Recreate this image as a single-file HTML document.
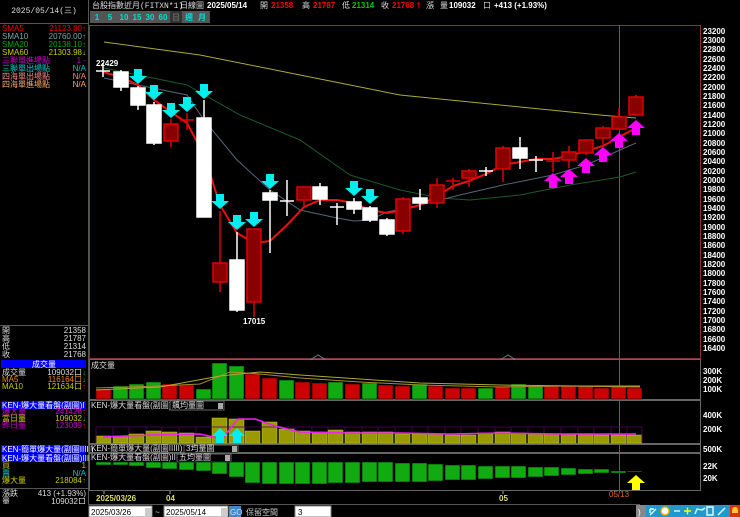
<!DOCTYPE html>
<html><head><meta charset="utf-8"><style>
body{margin:0;background:#000;width:740px;height:517px;overflow:hidden}
svg{display:block}
text{font-family:"Liberation Sans","Noto Sans CJK TC",sans-serif;font-size:8px}
.m{font-family:"Liberation Mono","Noto Sans CJK TC",monospace}
.ax{font-size:8px;fill:#fff;font-weight:bold}
</style></head><body>
<svg width="740" height="517" viewBox="0 0 740 517" xmlns="http://www.w3.org/2000/svg">
<rect width="740" height="517" fill="#000"/>
<!-- left panel border -->
<line x1="88.5" y1="0" x2="88.5" y2="505" stroke="#555"/>
<line x1="0" y1="23.5" x2="88" y2="23.5" stroke="#555"/>
<text x="44" y="13" fill="#ddd" text-anchor="middle" class="m">2025/05/14(三)</text>
<g class="m" font-size="7">
<text x="2" y="31" fill="#e00">SMA5</text><text x="86" y="31" fill="#e00" text-anchor="end">21123.80↑</text>
<text x="2" y="39" fill="#7aa">SMA10</text><text x="86" y="39" fill="#7aa" text-anchor="end">20760.00↑</text>
<text x="2" y="47" fill="#0a0">SMA20</text><text x="86" y="47" fill="#0a0" text-anchor="end">20138.10↑</text>
<text x="2" y="55" fill="#cc0">SMA60</text><text x="86" y="55" fill="#cc0" text-anchor="end">21303.98↓</text>
<text x="2" y="63" fill="#c0c">三聯單進場點</text><text x="86" y="63" fill="#c0c" text-anchor="end">1 -</text>
<text x="2" y="71" fill="#0cc">三聯單出場點</text><text x="86" y="71" fill="#0cc" text-anchor="end">N/A</text>
<text x="2" y="79" fill="#f88">四海單出場點</text><text x="86" y="79" fill="#f88" text-anchor="end">N/A</text>
<text x="2" y="87" fill="#fa6">四海單進場點</text><text x="86" y="87" fill="#fa6" text-anchor="end">N/A</text>
<line x1="0" y1="325.5" x2="88" y2="325.5" stroke="#555"/>
<text x="2" y="333" fill="#ddd">開</text><text x="86" y="333" fill="#ddd" text-anchor="end">21358</text>
<text x="2" y="341" fill="#ddd">高</text><text x="86" y="341" fill="#ddd" text-anchor="end">21787</text>
<text x="2" y="349" fill="#ddd">低</text><text x="86" y="349" fill="#ddd" text-anchor="end">21314</text>
<text x="2" y="357" fill="#ddd">收</text><text x="86" y="357" fill="#ddd" text-anchor="end">21768</text>
<rect x="1" y="360" width="85" height="8" fill="#00f"/><text x="44" y="367" fill="#fff" text-anchor="middle">成交量</text>
<text x="2" y="375" fill="#ddd">成交量</text><text x="86" y="375" fill="#ddd" text-anchor="end">109032口<tspan fill="#0c0">↓</tspan></text>
<text x="2" y="382" fill="#e80">MA5</text><text x="86" y="382" fill="#e80" text-anchor="end">116164口<tspan fill="#0c0">↓</tspan></text>
<text x="2" y="389" fill="#cc0">MA10</text><text x="86" y="389" fill="#cc0" text-anchor="end">121634口<tspan fill="#f00">↑</tspan></text>
<rect x="1" y="401" width="85" height="8" fill="#00f"/><text x="2" y="408" fill="#fff">KEN-爆大量看盤(副圖)I</text>
<text x="2" y="414" fill="#c0c">爆大量</text><text x="86" y="414" fill="#c0c" text-anchor="end">241426<tspan fill="#f00">↑</tspan></text>
<text x="2" y="421" fill="#cc0">當日量</text><text x="86" y="421" fill="#cc0" text-anchor="end">109032<tspan fill="#0c0">↓</tspan></text>
<text x="2" y="428" fill="#c0c">昨日量</text><text x="86" y="428" fill="#c0c" text-anchor="end">123039<tspan fill="#f00">↑</tspan></text>
<rect x="1" y="445" width="85" height="8" fill="#00f"/><text x="2" y="452" fill="#fff">KEN-簡單爆大量(副圖IIIII)</text>
<rect x="1" y="454" width="85" height="8" fill="#00f"/><text x="2" y="461" fill="#fff">KEN-爆大量看盤(副圖)III</text>
<text x="2" y="468" fill="#cc0">買</text><text x="86" y="468" fill="#cc0" text-anchor="end">1</text>
<text x="2" y="476" fill="#0cc">賣</text><text x="86" y="476" fill="#0cc" text-anchor="end">N/A</text>
<text x="2" y="483" fill="#cc0">爆大量</text><text x="86" y="483" fill="#cc0" text-anchor="end">218084<tspan fill="#0c0">↑</tspan></text>
<line x1="0" y1="488.5" x2="88" y2="488.5" stroke="#555"/>
<text x="2" y="496" fill="#ddd">漲跌</text><text x="86" y="496" fill="#ddd" text-anchor="end">413 (+1.93%)</text>
<text x="2" y="504" fill="#ddd">量</text><text x="86" y="504" fill="#ddd" text-anchor="end">109032口</text>
</g>
<!-- header -->
<text x="92" y="8" fill="#ddd" class="m">台股指數近月(FITXN*1)</text>
<text x="180" y="8" fill="#ddd" class="m">日線圖</text>
<text x="207" y="8" fill="#fff" font-weight="bold" font-size="9">2025/05/14</text>
<text x="260" y="8" fill="#ddd">開</text><text x="271" y="8" fill="#f00" font-weight="bold" font-size="9">21358</text>
<text x="302" y="8" fill="#ddd">高</text><text x="313" y="8" fill="#f00" font-weight="bold" font-size="9">21787</text>
<text x="342" y="8" fill="#ddd">低</text><text x="352" y="8" fill="#0c0" font-weight="bold" font-size="9">21314</text>
<text x="381" y="8" fill="#ddd">收</text><text x="392" y="8" fill="#f00" font-weight="bold" font-size="9">21768 †</text>
<text x="426" y="8" fill="#ddd">漲</text>
<text x="440" y="8" fill="#ddd">量</text><text x="449" y="8" fill="#fff" font-weight="bold" font-size="9">109032</text><text x="483" y="8" fill="#ddd">口</text>
<text x="494" y="8" fill="#fff" font-weight="bold" font-size="9">+413 (+1.93%)</text>
<g font-size="8" font-weight="bold">
<rect x="90" y="11" width="120" height="12" fill="#555"/>
<rect x="170" y="11" width="12" height="12" fill="#333"/>
<text x="97" y="20" fill="#0dd" text-anchor="middle">1</text>
<text x="110" y="20" fill="#0dd" text-anchor="middle">5</text>
<text x="124" y="20" fill="#0dd" text-anchor="middle">10</text>
<text x="137" y="20" fill="#0dd" text-anchor="middle">15</text>
<text x="150" y="20" fill="#0dd" text-anchor="middle">30</text>
<text x="163" y="20" fill="#0dd" text-anchor="middle">60</text>
<text x="176" y="20" fill="#666" text-anchor="middle">日</text>
<text x="189" y="20" fill="#0dd" text-anchor="middle">週</text>
<text x="202" y="20" fill="#0dd" text-anchor="middle">月</text>
</g>
<!-- main chart box -->
<rect x="89.5" y="25.5" width="611" height="333" fill="none" stroke="#833"/>
<line x1="619.5" y1="25" x2="619.5" y2="492" stroke="#a42" />
<g class="ax">
<text x="703" y="34">23200</text><text x="703" y="43">23000</text><text x="703" y="52">22800</text><text x="703" y="62">22600</text><text x="703" y="71">22400</text><text x="703" y="80">22200</text><text x="703" y="90">22000</text><text x="703" y="99">21800</text><text x="703" y="108">21600</text><text x="703" y="118">21400</text><text x="703" y="127">21200</text><text x="703" y="136">21000</text><text x="703" y="146">20800</text><text x="703" y="155">20600</text><text x="703" y="164">20400</text><text x="703" y="174">20200</text><text x="703" y="183">20000</text><text x="703" y="192">19800</text><text x="703" y="202">19600</text><text x="703" y="211">19400</text><text x="703" y="220">19200</text><text x="703" y="230">19000</text><text x="703" y="239">18800</text><text x="703" y="248">18600</text><text x="703" y="258">18400</text><text x="703" y="267">18200</text><text x="703" y="276">18000</text><text x="703" y="286">17800</text><text x="703" y="295">17600</text><text x="703" y="304">17400</text><text x="703" y="314">17200</text><text x="703" y="323">17000</text><text x="703" y="332">16800</text><text x="703" y="342">16600</text><text x="703" y="351">16400</text>
<text x="703" y="374">300K</text><text x="703" y="383">200K</text><text x="703" y="392">100K</text>
<text x="703" y="418">400K</text><text x="703" y="432">200K</text>
<text x="703" y="452">500K</text>
<text x="703" y="469">22K</text><text x="703" y="481">20K</text>
</g>
<!-- MA lines -->
<polyline fill="none" stroke="#aa3" stroke-width="1" points="104,42 200,55 300,75 400,95 500,105 600,115 636,118"/>
<polyline fill="none" stroke="#1a5a2a" stroke-width="1" points="104,68 187,85 240,115 300,140 350,175 400,190 440,198 470,200 520,195 570,185 620,177 636,172"/>
<polyline fill="none" stroke="#567" stroke-width="1" points="104,78 187,95 204,120 237,160 270,190 300,210 337,218 354,221 370,220 387,212 420,205 460,195 503,185 553,175 586,165 620,150 636,143"/>
<polyline fill="none" stroke="#e11" stroke-width="2" points="103,72 121,77 138,85 154,100 171,112 187,123 204,155 220,205 237,233 254,243 270,241 287,225 304,207 320,200 337,200 354,203 370,210 387,213 403,210 420,205 437,196 453,186 469,181 486,174 503,165 520,162 536,159 553,159 569,156 586,151 603,146 619,137 636,128"/>
<!-- candles -->
<g stroke-width="1.5">
<g stroke="#fff" fill="#fff">
<line x1="103" y1="63" x2="103" y2="77"/><line x1="96" y1="71" x2="110" y2="71"/>
<line x1="121" y1="70" x2="121" y2="91"/><rect x="114" y="72" width="14" height="15"/>
<line x1="138" y1="86" x2="138" y2="110"/><rect x="131" y="88" width="14" height="17"/>
<line x1="154" y1="102" x2="154" y2="145"/><rect x="147" y="105" width="14" height="38"/>
<line x1="204" y1="100" x2="204" y2="217"/><rect x="197" y="118" width="14" height="99"/>
<line x1="237" y1="232" x2="237" y2="312"/><rect x="230" y="260" width="14" height="50"/>
<line x1="270" y1="190" x2="270" y2="253"/><rect x="263" y="193" width="14" height="7"/>
<line x1="287" y1="180" x2="287" y2="216"/><line x1="280" y1="201" x2="294" y2="201"/>
<line x1="320" y1="183" x2="320" y2="205"/><rect x="313" y="187" width="14" height="12"/>
<line x1="337" y1="203" x2="337" y2="225"/><line x1="330" y1="207" x2="344" y2="207"/>
<line x1="354" y1="198" x2="354" y2="214"/><rect x="347" y="202" width="14" height="7"/>
<line x1="370" y1="206" x2="370" y2="222"/><rect x="363" y="208" width="14" height="12"/>
<line x1="387" y1="218" x2="387" y2="236"/><rect x="380" y="220" width="14" height="14"/>
<line x1="420" y1="189" x2="420" y2="210"/><rect x="413" y="198" width="14" height="5"/>
<line x1="486" y1="167" x2="486" y2="176"/><line x1="479" y1="171" x2="493" y2="171"/>
<line x1="520" y1="137" x2="520" y2="169"/><rect x="513" y="148" width="14" height="10"/>
<line x1="536" y1="156" x2="536" y2="172"/><line x1="529" y1="160" x2="543" y2="160"/>
</g>
<g stroke="#d00" fill="#800">
<line x1="171" y1="119" x2="171" y2="147"/><rect x="164" y="124" width="14" height="17"/>
<line x1="187" y1="113" x2="187" y2="130"/><line x1="180" y1="120" x2="194" y2="120"/>
<line x1="220" y1="211" x2="220" y2="292"/><rect x="213" y="263" width="14" height="19"/>
<line x1="254" y1="229" x2="254" y2="317"/><rect x="247" y="229" width="14" height="73"/>
<line x1="304" y1="186" x2="304" y2="207"/><rect x="297" y="187" width="14" height="13"/>
<line x1="403" y1="197" x2="403" y2="234"/><rect x="396" y="199" width="14" height="32"/>
<line x1="437" y1="178" x2="437" y2="208"/><rect x="430" y="185" width="14" height="18"/>
<line x1="453" y1="178" x2="453" y2="190"/><line x1="446" y1="181" x2="460" y2="181"/>
<line x1="469" y1="169" x2="469" y2="187"/><rect x="462" y="171" width="14" height="7"/>
<line x1="503" y1="146" x2="503" y2="182"/><rect x="496" y="148" width="14" height="21"/>
<line x1="553" y1="152" x2="553" y2="172"/><line x1="546" y1="161" x2="560" y2="161"/>
<line x1="569" y1="146" x2="569" y2="168"/><rect x="562" y="152" width="14" height="8"/>
<line x1="586" y1="139" x2="586" y2="155"/><rect x="579" y="140" width="14" height="13"/>
<line x1="603" y1="126" x2="603" y2="146"/><rect x="596" y="128" width="14" height="10"/>
<line x1="619" y1="108" x2="619" y2="130"/><rect x="612" y="117" width="14" height="12"/>
<line x1="636" y1="95" x2="636" y2="116"/><rect x="629" y="97" width="14" height="18"/>
</g>
</g>
<text x="96" y="66" fill="#fff" font-weight="bold" font-size="8">22429</text>
<text x="243" y="324" fill="#fff" font-weight="bold" font-size="8">17015</text>
<!-- cyan down arrows -->
<g fill="#0ee">
<path d="M134 69h8v7h5l-9 8-9-8h5z"/>
<path d="M150 85h8v7h5l-9 8-9-8h5z"/>
<path d="M167 103h8v7h5l-9 8-9-8h5z"/>
<path d="M183 97h8v7h5l-9 8-9-8h5z"/>
<path d="M200 84h8v7h5l-9 8-9-8h5z"/>
<path d="M216 194h8v7h5l-9 8-9-8h5z"/>
<path d="M233 215h8v7h5l-9 8-9-8h5z"/>
<path d="M250 212h8v7h5l-9 8-9-8h5z"/>
<path d="M266 174h8v7h5l-9 8-9-8h5z"/>
<path d="M350 181h8v7h5l-9 8-9-8h5z"/>
<path d="M366 189h8v7h5l-9 8-9-8h5z"/>
</g>
<!-- magenta up arrows -->
<g fill="#f0f">
<path d="M549 188h8v-7h5l-9-8-9 8h5z"/>
<path d="M565 184h8v-7h5l-9-8-9 8h5z"/>
<path d="M582 173h8v-7h5l-9-8-9 8h5z"/>
<path d="M599 162h8v-7h5l-9-8-9 8h5z"/>
<path d="M615 148h8v-7h5l-9-8-9 8h5z"/>
<path d="M632 135h8v-7h5l-9-8-9 8h5z"/>
</g>
<!-- volume panel -->
<rect x="89.5" y="359.5" width="611" height="40" fill="none" stroke="#666"/>
<text x="91" y="368" fill="#ddd">成交量</text>
<path d="M310 360 l8 -5 8 5 M500 360 l8 -5 8 5" stroke="#588" fill="none"/>
<g stroke="#000" stroke-width="0.5">
<rect x="96" y="389" width="15" height="10" fill="#c00"/>
<rect x="113" y="386" width="15" height="13" fill="#1a1"/>
<rect x="129" y="384" width="15" height="15" fill="#1a1"/>
<rect x="146" y="382" width="15" height="17" fill="#1a1"/>
<rect x="162" y="384" width="15" height="15" fill="#c00"/>
<rect x="179" y="385" width="15" height="14" fill="#c00"/>
<rect x="196" y="389" width="15" height="10" fill="#1a1"/>
<rect x="212" y="363" width="15" height="36" fill="#1a1"/>
<rect x="229" y="366" width="15" height="33" fill="#1a1"/>
<rect x="245" y="374" width="15" height="25" fill="#c00"/>
<rect x="262" y="378" width="15" height="21" fill="#c00"/>
<rect x="279" y="380" width="15" height="19" fill="#1a1"/>
<rect x="295" y="382" width="15" height="17" fill="#c00"/>
<rect x="312" y="383" width="15" height="16" fill="#c00"/>
<rect x="328" y="382" width="15" height="17" fill="#1a1"/>
<rect x="345" y="384" width="15" height="15" fill="#c00"/>
<rect x="362" y="383" width="15" height="16" fill="#1a1"/>
<rect x="378" y="385" width="15" height="14" fill="#c00"/>
<rect x="395" y="386" width="15" height="13" fill="#c00"/>
<rect x="412" y="384" width="15" height="15" fill="#1a1"/>
<rect x="428" y="386" width="15" height="13" fill="#c00"/>
<rect x="445" y="388" width="15" height="11" fill="#c00"/>
<rect x="461" y="388" width="15" height="11" fill="#c00"/>
<rect x="478" y="388" width="15" height="11" fill="#1a1"/>
<rect x="495" y="386" width="15" height="13" fill="#c00"/>
<rect x="511" y="384" width="15" height="15" fill="#1a1"/>
<rect x="528" y="386" width="15" height="13" fill="#1a1"/>
<rect x="544" y="386" width="15" height="13" fill="#c00"/>
<rect x="561" y="386" width="15" height="13" fill="#c00"/>
<rect x="578" y="386" width="15" height="13" fill="#c00"/>
<rect x="594" y="388" width="15" height="11" fill="#c00"/>
<rect x="611" y="386" width="15" height="13" fill="#c00"/>
<rect x="627" y="388" width="15" height="11" fill="#c00"/>
</g>
<polyline fill="none" stroke="#a83" points="96,388 160,386 200,384 230,372 260,374 300,378 360,382 420,385 500,387 560,386 640,387"/>
<polyline fill="none" stroke="#aa3" points="96,390 160,387 220,376 260,372 300,375 360,379 420,383 500,385 580,386 640,386"/>
<!-- KEN panel -->
<rect x="89.5" y="400.5" width="611" height="43" fill="none" stroke="#666"/>
<text x="91" y="408" fill="#ddd">KEN-爆大量看盤(副圖)I</text>
<rect x="170" y="401" width="54" height="9" fill="#000" stroke="#666"/><text x="172" y="408" fill="#ddd">飆均量圖</text><rect x="218" y="403" width="5" height="6" fill="#aaa"/>
<g fill="#990" stroke="#cc4" stroke-width="0.5">
<rect x="96" y="436" width="15" height="7"/><rect x="113" y="436" width="15" height="7"/><rect x="129" y="434" width="15" height="9"/><rect x="146" y="431" width="15" height="12"/><rect x="162" y="432" width="15" height="11"/><rect x="179" y="433" width="15" height="10"/><rect x="196" y="437" width="15" height="6"/><rect x="212" y="418" width="15" height="25"/><rect x="229" y="419" width="15" height="24"/><rect x="245" y="431" width="15" height="12"/><rect x="262" y="422" width="15" height="21"/><rect x="279" y="429" width="15" height="14"/><rect x="295" y="431" width="15" height="12"/><rect x="312" y="432" width="15" height="11"/><rect x="328" y="430" width="15" height="13"/><rect x="345" y="432" width="15" height="11"/><rect x="362" y="432" width="15" height="11"/><rect x="378" y="432" width="15" height="11"/><rect x="395" y="434" width="15" height="9"/><rect x="412" y="434" width="15" height="9"/><rect x="428" y="434" width="15" height="9"/><rect x="445" y="435" width="15" height="8"/><rect x="461" y="435" width="15" height="8"/><rect x="478" y="433" width="15" height="10"/><rect x="495" y="432" width="15" height="11"/><rect x="511" y="433" width="15" height="10"/><rect x="528" y="434" width="15" height="9"/><rect x="544" y="434" width="15" height="9"/><rect x="561" y="434" width="15" height="9"/><rect x="578" y="434" width="15" height="9"/><rect x="594" y="435" width="15" height="8"/><rect x="611" y="435" width="15" height="8"/><rect x="627" y="435" width="15" height="8"/>
</g>
<g fill="none" stroke="#506" stroke-width="0.8">
<path d="M96 427h546M96 427v16M113 427v9M129 427v7M146 427v4M162 427v5M179 427v6M196 427v10M245 427v4M279 427v2M295 427v4M312 427v5M328 427v3M345 427v5M362 427v5M378 427v5M395 427v7M412 427v7M428 427v7M445 427v8M461 427v8M478 427v6M495 427v5M511 427v6M528 427v7M544 427v7M561 427v7M578 427v7M594 427v8M611 427v8M627 427v8M642 427v16"/>
</g>
<polyline fill="none" stroke="#e2e" stroke-width="1.5" points="103,437 150,435 200,434 222,439 238,419 255,419 275,426 300,432 350,433 400,433 450,434 500,433 560,434 600,434 636,434"/>
<g fill="#0ee">
<path d="M216 443h8v-7h4l-8-8-8 8h4z"/>
<path d="M233 443h8v-7h4l-8-8-8 8h4z"/>
</g>
<!-- thin panel -->
<rect x="89.5" y="444.5" width="611" height="8" fill="none" stroke="#666"/>
<text x="91" y="451" fill="#ddd">KEN-簡單爆大量(副圖IIIII)</text>
<rect x="184" y="445" width="54" height="8" fill="#000" stroke="#666"/><text x="186" y="451" fill="#ddd">3均量圖</text><rect x="232" y="446" width="5" height="6" fill="#aaa"/>
<!-- third panel -->
<rect x="89.5" y="453.5" width="611" height="37" fill="none" stroke="#666"/>
<text x="91" y="460" fill="#ddd">KEN-爆大量看盤(副圖)III</text>
<rect x="177" y="454" width="54" height="8" fill="#000" stroke="#666"/><text x="179" y="460" fill="#ddd">五均量圖</text><rect x="225" y="455" width="5" height="6" fill="#aaa"/>
<g fill="#1a1" stroke="#000" stroke-width="0.5">
<rect x="96" y="462" width="15" height="3"/><rect x="113" y="462" width="15" height="3"/><rect x="129" y="462" width="15" height="4"/><rect x="146" y="462" width="15" height="6"/><rect x="162" y="462" width="15" height="7"/><rect x="179" y="462" width="15" height="8"/><rect x="196" y="462" width="15" height="9"/><rect x="212" y="462" width="15" height="12"/><rect x="229" y="462" width="15" height="15"/><rect x="245" y="462" width="15" height="21"/><rect x="262" y="462" width="15" height="22"/><rect x="279" y="462" width="15" height="22"/><rect x="295" y="462" width="15" height="22"/><rect x="312" y="462" width="15" height="22"/><rect x="328" y="462" width="15" height="21"/><rect x="345" y="462" width="15" height="21"/><rect x="362" y="462" width="15" height="20"/><rect x="378" y="462" width="15" height="20"/><rect x="395" y="463" width="15" height="19"/><rect x="412" y="463" width="15" height="19"/><rect x="428" y="464" width="15" height="17"/><rect x="445" y="465" width="15" height="15"/><rect x="461" y="465" width="15" height="15"/><rect x="478" y="466" width="15" height="13"/><rect x="495" y="466" width="15" height="12"/><rect x="511" y="466" width="15" height="12"/><rect x="528" y="467" width="15" height="10"/><rect x="544" y="467" width="15" height="9"/><rect x="561" y="468" width="15" height="7"/><rect x="578" y="469" width="15" height="5"/><rect x="594" y="469" width="15" height="4"/><rect x="611" y="471" width="15" height="2"/><rect x="627" y="471" width="15" height="1"/>
</g>
<path d="M632 490h8v-7h5l-9-8-9 8h5z" fill="#ff0"/>
<!-- date axis -->
<line x1="104" y1="491" x2="104" y2="494" stroke="#aa6"/><line x1="170" y1="491" x2="170" y2="494" stroke="#aa6"/><line x1="503" y1="491" x2="503" y2="494" stroke="#aa6"/>
<text x="96" y="501" fill="#dd6" font-size="8" font-weight="bold">2025/03/26</text>
<text x="166" y="501" fill="#dd6" font-size="8" font-weight="bold">04</text>
<text x="499" y="501" fill="#dd6" font-size="8" font-weight="bold">05</text>
<text x="609" y="497" fill="#e62" font-size="7">05/13</text>
<!-- bottom controls -->
<rect x="0" y="504" width="740" height="13" fill="#000"/>
<line x1="88" y1="504.5" x2="640" y2="504.5" stroke="#555"/>
<rect x="89" y="506" width="63" height="11" fill="#fff" stroke="#888"/><text x="91" y="515" fill="#000" font-size="10">2025/03/26</text><rect x="145" y="508" width="6" height="8" fill="#ccc"/>
<text x="155" y="515" fill="#ddd" font-size="10">~</text>
<rect x="164" y="506" width="64" height="11" fill="#fff" stroke="#888"/><text x="166" y="515" fill="#000" font-size="10">2025/05/14</text><rect x="221" y="508" width="6" height="8" fill="#ccc"/>
<rect x="229" y="506" width="12" height="11" fill="#48c"/><text x="230" y="515" fill="#cdf" font-size="8">GO</text>
<text x="246" y="515" fill="#ccc" font-size="11">保留空間</text>
<rect x="295" y="506" width="36" height="11" fill="#fff" stroke="#888"/><text x="298" y="515" fill="#000" font-size="10">3</text>
<rect x="636" y="505" width="10" height="12" fill="#888"/><text x="638" y="515" fill="#fff" font-size="9">)</text>
<rect x="646" y="505" width="84" height="12" fill="#29c"/>
<g stroke="#dff" stroke-width="1.4" fill="none">
<path d="M650 515l6-6M650 509h4M650 509v4"/>
<circle cx="665" cy="511" r="4" fill="#fff" stroke="#fa0"/>
<path d="M674 511h6"/>
<path d="M684 511h7M687.5 507.5v7" stroke="#ff0"/>
<path d="M695 514l2-5 5 1 3-2"/>
<path d="M707 507h6v8h-6z"/>
<path d="M718 515l7-7"/>
</g>
<rect x="730" y="505" width="10" height="12" fill="#d30"/><path d="M735 507c-3 0-3 3-3 6h6c0-3 0-6-3-6z" fill="#fc3"/>
</svg>
</body></html>
